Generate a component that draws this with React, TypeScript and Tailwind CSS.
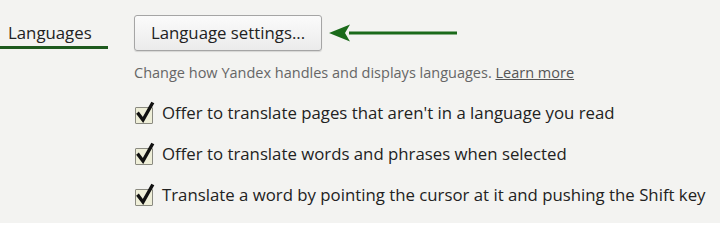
import React from "react";

function Check() {
  return (
    <span className="relative inline-block w-[21px] h-[24px] shrink-0">
      <span className="absolute left-[1px] bottom-[1px] w-[18px] h-[17px] border border-[#8a8a80] bg-[#eeeed8] rounded-[1px]" />
      <svg className="absolute left-0 top-0" width="24" height="24" viewBox="0 0 24 24">
        <path d="M4.5 13 L9 19 L18 3" fill="none" stroke="#111" strokeWidth="3.4" strokeLinecap="square" strokeLinejoin="miter" />
      </svg>
    </span>
  );
}

const items = [
  "Offer to translate pages that aren't in a language you read",
  "Offer to translate words and phrases when selected",
  "Translate a word by pointing the cursor at it and pushing the Shift key",
];

export default function App() {
  return (
    <div className="w-[720px] h-[223px] bg-[#f3f3f1] overflow-hidden flex font-['Open_Sans',sans-serif] text-[#222]">
      <div className="w-[134px] shrink-0 pt-[22px]">
        <div className="pl-[8px] text-[16.8px] leading-[21px] text-[#222]">Languages</div>
        <div className="mt-[3px] w-[108px] h-[3px] bg-[#1e5a1e]" />
      </div>
      <div className="flex flex-col pt-[15px]">
        <div className="flex items-center">
          <div className="w-[188px] h-[36px] rounded-[3px] border border-[#a5a5a5] bg-gradient-to-b from-[#fbfbfb] to-[#ebebeb] shadow-[0_1px_1px_rgba(0,0,0,0.12)] flex items-center justify-center text-[16.8px] text-[#222]">
            Language settings...
          </div>
          <svg className="ml-[7px]" width="130" height="20" viewBox="0 0 130 20">
            <path d="M20 10 L128 10" stroke="#1a6a1a" strokeWidth="3" />
            <path d="M0 10 L21 1.5 L16 10 L21 18.5 Z" fill="#1a6a1a" />
          </svg>
        </div>
        <div className="mt-[13px] text-[14.5px] leading-[18px] text-[#666]">
          Change how Yandex handles and displays languages.{" "}
          <span className="underline text-[#555]">Learn more</span>
        </div>
        <div className="mt-[19px] flex flex-col gap-[17px]">
          {items.map((t) => (
            <div key={t} className="flex items-end gap-[7px] h-[24px]">
              <Check />
              <span className="text-[16.8px] leading-[24px] text-[#222]">{t}</span>
            </div>
          ))}
        </div>
      </div>
    </div>
  );
}
